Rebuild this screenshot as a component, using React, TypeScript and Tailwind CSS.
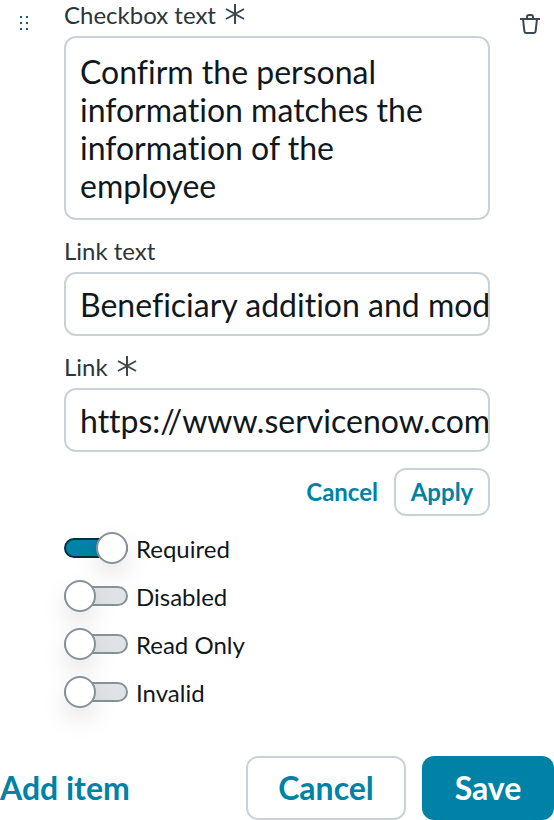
import { ReactNode, useState } from 'react';

const fieldClass =
  'block w-full rounded-xl border-2 border-[#cbd2d6] bg-white pl-[14px] text-[32px] text-[#10181c] outline-none focus:border-[#0082a6]';

function GripIcon() {
  return (
    <svg width="8" height="14" viewBox="0 0 8 14" fill="#165f78">
      <path d="M0 0h2v2H0zM6 0h2v2H6zM0 6h2v2H0zM6 6h2v2H6zM0 12h2v2H0zM6 12h2v2H6z" />
    </svg>
  );
}

function TrashIcon() {
  return (
    <svg
      width="20"
      height="20"
      viewBox="0 0 20 20"
      fill="none"
      stroke="#3c484e"
      strokeWidth="2"
    >
      <path d="M0 5h20" />
      <path d="M7 5V3q0-2 2-2h2q2 0 2 2v2" />
      <path d="M3 5l1.4 12.4q.2 1.6 1.6 1.6h8q1.4 0 1.6-1.6L17 5" />
    </svg>
  );
}

function RequiredMark() {
  return (
    <svg
      width="20"
      height="20"
      viewBox="0 0 20 20"
      fill="none"
      stroke="#3c484e"
      strokeWidth="2"
      aria-hidden="true"
    >
      <path d="M10 0v20M1 5l18 10M19 5L1 15" />
    </svg>
  );
}

interface FieldProps {
  id: string;
  label: string;
  required?: boolean;
  children: ReactNode;
}

function Field({ id, label, required, children }: FieldProps) {
  return (
    <div className="flex flex-col gap-[6px]">
      <label
        htmlFor={id}
        className="flex items-start gap-[9px] text-2xl leading-[30px] text-[#2b363b]"
      >
        {label}
        {required && (
          <span className="pt-1">
            <RequiredMark />
          </span>
        )}
      </label>
      {children}
    </div>
  );
}

function Toggle({ label, initial }: { label: string; initial?: boolean }) {
  const [checked, setChecked] = useState(Boolean(initial));

  return (
    <label className="flex h-8 cursor-pointer gap-2 text-2xl leading-[34px] text-[#10181c]">
      <span className="relative flex h-8 w-16 items-center">
        <input
          type="checkbox"
          role="switch"
          checked={checked}
          onChange={(e) => setChecked(e.target.checked)}
          className="peer h-5 w-16 cursor-pointer appearance-none rounded-full border-2 border-[#879297] bg-[#dfe3e6] checked:border-[#00303d] checked:bg-[#0082a6]"
        />
        <span className="pointer-events-none absolute top-0 left-0 size-8 rounded-full border-2 border-[#879297] bg-white shadow-[0_12px_24px_rgba(0,0,0,0.1)] peer-checked:left-8" />
      </span>
      <span>{label}</span>
    </label>
  );
}

export default function App() {
  const [text, setText] = useState(
    'Confirm the personal information matches the information of the employee',
  );
  const [linkText, setLinkText] = useState('Beneficiary addition and mod');
  const [link, setLink] = useState('https://www.servicenow.com');

  return (
    <form
      className="bg-white font-['Lato',sans-serif] [font-variant-ligatures:none]"
      onSubmit={(e) => e.preventDefault()}
    >
      <div className="flex items-start">
        <button
          type="button"
          aria-label="Reorder item"
          className="flex w-16 shrink-0 cursor-grab pt-4 pl-5"
        >
          <GripIcon />
        </button>

        <div className="flex min-w-0 flex-1 flex-col gap-4">
          <Field id="checkbox-text" label="Checkbox text" required>
            <textarea
              id="checkbox-text"
              rows={4}
              value={text}
              onChange={(e) => setText(e.target.value)}
              className={`${fieldClass} resize-none overflow-hidden pt-[15px] pr-[14px] pb-[13px] leading-[38px] [font-variant-ligatures:none]`}
            />
          </Field>

          <Field id="link-text" label="Link text">
            <input
              id="link-text"
              type="text"
              value={linkText}
              onChange={(e) => setLinkText(e.target.value)}
              className={`${fieldClass} h-16 [font-variant-ligatures:none]`}
            />
          </Field>

          <Field id="link" label="Link" required>
            <input
              id="link"
              type="text"
              value={link}
              onChange={(e) => setLink(e.target.value)}
              className={`${fieldClass} h-16 [font-variant-ligatures:none]`}
            />
          </Field>

          <div className="flex justify-end text-2xl font-bold text-[#0082a6]">
            <button type="button" className="h-12 px-4">
              Cancel
            </button>
            <button
              type="button"
              className="h-12 min-w-24 rounded-xl border-2 border-[#cbd2d6] px-[14px]"
            >
              Apply
            </button>
          </div>

          <div className="flex flex-col gap-4">
            <Toggle label="Required" initial />
            <Toggle label="Disabled" />
            <Toggle label="Read Only" />
            <Toggle label="Invalid" />
          </div>
        </div>

        <button
          type="button"
          aria-label="Delete item"
          className="flex w-16 shrink-0 justify-end pt-[14px] pr-[14px]"
        >
          <TrashIcon />
        </button>
      </div>

      <div className="flex items-center gap-4 pt-12 text-[32px] font-bold text-[#0082a6]">
        <button type="button" className="mr-auto h-16">
          Add item
        </button>
        <button
          type="button"
          className="h-16 min-w-40 rounded-xl border-2 border-[#cbd2d6] px-[30px]"
        >
          Cancel
        </button>
        <button
          type="submit"
          className="h-16 min-w-33 rounded-xl bg-[#0082a6] px-8 text-white"
        >
          Save
        </button>
      </div>
    </form>
  );
}
